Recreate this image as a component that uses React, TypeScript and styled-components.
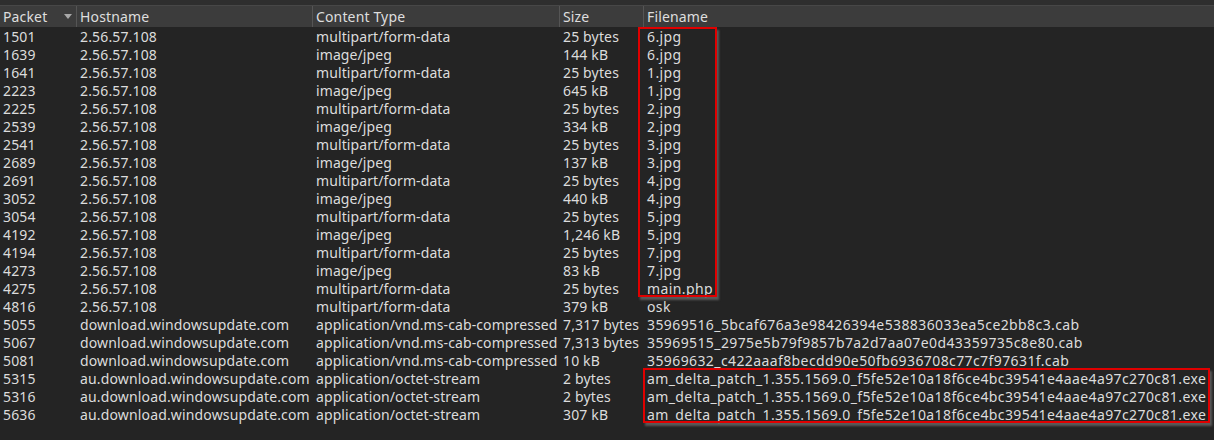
import React from "react";
import styled, { createGlobalStyle } from "styled-components";

const Global = createGlobalStyle`
  html, body { margin: 0; padding: 0; background: #242424; }
  body { font-family: "Noto Sans", "DejaVu Sans", sans-serif; }
`;

type Row = [string, string, string, string, string];

const rows: Row[] = [
  ["1501", "2.56.57.108", "multipart/form-data", "25 bytes", "6.jpg"],
  ["1639", "2.56.57.108", "image/jpeg", "144 kB", "6.jpg"],
  ["1641", "2.56.57.108", "multipart/form-data", "25 bytes", "1.jpg"],
  ["2223", "2.56.57.108", "image/jpeg", "645 kB", "1.jpg"],
  ["2225", "2.56.57.108", "multipart/form-data", "25 bytes", "2.jpg"],
  ["2539", "2.56.57.108", "image/jpeg", "334 kB", "2.jpg"],
  ["2541", "2.56.57.108", "multipart/form-data", "25 bytes", "3.jpg"],
  ["2689", "2.56.57.108", "image/jpeg", "137 kB", "3.jpg"],
  ["2691", "2.56.57.108", "multipart/form-data", "25 bytes", "4.jpg"],
  ["3052", "2.56.57.108", "image/jpeg", "440 kB", "4.jpg"],
  ["3054", "2.56.57.108", "multipart/form-data", "25 bytes", "5.jpg"],
  ["4192", "2.56.57.108", "image/jpeg", "1,246 kB", "5.jpg"],
  ["4194", "2.56.57.108", "multipart/form-data", "25 bytes", "7.jpg"],
  ["4273", "2.56.57.108", "image/jpeg", "83 kB", "7.jpg"],
  ["4275", "2.56.57.108", "multipart/form-data", "25 bytes", "main.php"],
  ["4816", "2.56.57.108", "multipart/form-data", "379 kB", "osk"],
  ["5055", "download.windowsupdate.com", "application/vnd.ms-cab-compressed", "7,317 bytes", "35969516_5bcaf676a3e98426394e538836033ea5ce2bb8c3.cab"],
  ["5067", "download.windowsupdate.com", "application/vnd.ms-cab-compressed", "7,313 bytes", "35969515_2975e5b79f9857b7a2d7aa07e0d43359735c8e80.cab"],
  ["5081", "download.windowsupdate.com", "application/vnd.ms-cab-compressed", "10 kB", "35969632_c422aaaf8becdd90e50fb6936708c77c7f97631f.cab"],
  ["5315", "au.download.windowsupdate.com", "application/octet-stream", "2 bytes", "am_delta_patch_1.355.1569.0_f5fe52e10a18f6ce4bc39541e4aae4a97c270c81.exe"],
  ["5316", "au.download.windowsupdate.com", "application/octet-stream", "2 bytes", "am_delta_patch_1.355.1569.0_f5fe52e10a18f6ce4bc39541e4aae4a97c270c81.exe"],
  ["5636", "au.download.windowsupdate.com", "application/octet-stream", "307 kB", "am_delta_patch_1.355.1569.0_f5fe52e10a18f6ce4bc39541e4aae4a97c270c81.exe"],
];

const COLS = "77px 236px 247px 84px 1fr";
const ROW_H = 18;

const Page = styled.div`
  width: 1214px;
  height: 440px;
  background: #242424;
  overflow: hidden;
  display: flex;
  flex-direction: column;
`;

const TopStrip = styled.div`
  height: 5px;
  background: #2e2e2e;
  border-bottom: 1px solid #474747;
`;

const Header = styled.div`
  display: grid;
  grid-template-columns: ${COLS};
  height: 21px;
  background: #3c3c3c;
`;

const HeaderCell = styled.div<{ $last?: boolean }>`
  position: relative;
  display: flex;
  align-items: center;
  padding-left: 3px;
  color: #dedede;
  font-size: 14px;
  letter-spacing: 0.15px;
  border-right: ${(p) => (p.$last ? "none" : "1px solid #555555")};
`;

const SortArrow = styled.span`
  position: absolute;
  right: 4px;
  top: 8px;
  width: 0;
  height: 0;
  border-left: 4px solid transparent;
  border-right: 4px solid transparent;
  border-top: 5px solid #a8a8a8;
`;

const Body = styled.div`
  position: relative;
  padding-top: 1px;
`;

const RowLine = styled.div`
  display: grid;
  grid-template-columns: ${COLS};
  height: ${ROW_H}px;
  align-items: center;
`;

const Cell = styled.div<{ $spacing: number }>`
  padding-left: 3px;
  color: #dcdcdc;
  font-size: 14px;
  letter-spacing: ${(p) => p.$spacing}px;
  line-height: ${ROW_H}px;
  white-space: nowrap;
  overflow: visible;
`;

const Highlight = styled.div`
  position: absolute;
  border: 2px solid #e00000;
  box-shadow: 2px 3px 2px rgba(95, 95, 95, 0.9);
  pointer-events: none;
`;

const SPACING = [0.15, 0.15, 0.1, 0.15, 0.4];

export default function App() {
  return (
    <Page>
      <Global />
      <TopStrip />
      <Header>
        <HeaderCell>
          Packet
          <SortArrow />
        </HeaderCell>
        <HeaderCell>Hostname</HeaderCell>
        <HeaderCell>Content Type</HeaderCell>
        <HeaderCell>Size</HeaderCell>
        <HeaderCell $last>Filename</HeaderCell>
      </Header>
      <Body>
        {rows.map((r, i) => (
          <RowLine key={i}>
            {r.map((c, j) => (
              <Cell key={j} $spacing={SPACING[j]}>
                {c}
              </Cell>
            ))}
          </RowLine>
        ))}
        <Highlight style={{ left: 638, top: 0, width: 75, height: 266 }} />
        <Highlight style={{ left: 643, top: 341, width: 563, height: 51 }} />
      </Body>
    </Page>
  );
}
